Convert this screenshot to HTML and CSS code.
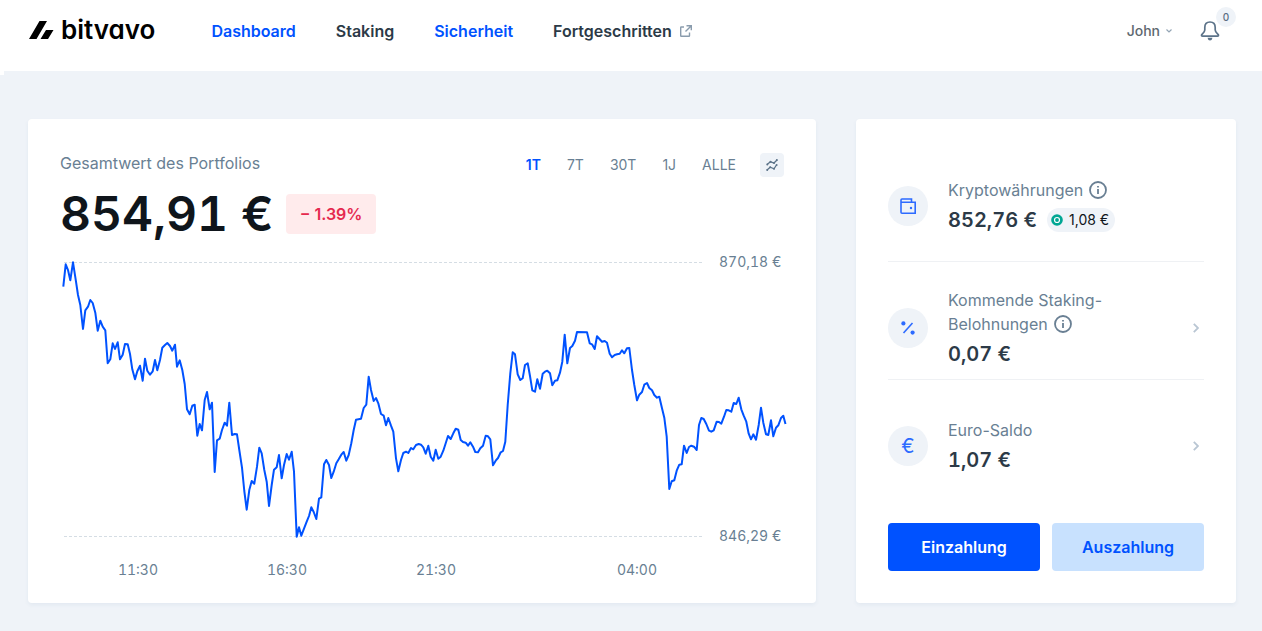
FILE: index.html
```html
<!DOCTYPE html>
<html lang="de">
<head>
<meta charset="utf-8">
<meta name="viewport" content="width=device-width, initial-scale=1">
<title>Bitvavo – Dashboard</title>
<link rel="stylesheet" href="styles.css">
</head>
<body>
<header class="header">
  <a class="logo" href="#">
    <svg class="logo-mark" width="25" height="18" viewBox="0 0 25 18" aria-hidden="true"><path d="M0 18 10.500 0H18L7.500 18Z M11.500 18 17 9H24.500L19 18Z"/></svg>
    <span class="logo-name">bitvavo</span>
  </a>
  <nav class="nav">
    <a class="nav-link nav-link-blue" href="#">Dashboard</a>
    <a class="nav-link" href="#">Staking</a>
    <a class="nav-link nav-link-blue" href="#">Sicherheit</a>
    <a class="nav-link" href="#">Fortgeschritten
      <svg class="external" width="12" height="12" viewBox="0 0 12 12" aria-hidden="true"><path d="M4 2H1.200Q.7 2 .7 2.500V10.800Q.7 11.300 1.200 11.300H9Q9.500 11.300 9.500 10.800V7.500M6.500.7H11.300V5.300M11.300.7 5.500 6.500"/></svg>
    </a>
  </nav>
  <div class="account">
    <button class="user" type="button">John
      <svg width="6" height="4" viewBox="0 0 6 4" aria-hidden="true"><path d="M.5.5 3 3 5.500.5"/></svg>
    </button>
    <button class="bell" type="button" aria-label="Benachrichtigungen">
      <svg width="20" height="20" viewBox="0 0 20 20" aria-hidden="true"><path class="bell-body" d="M10 1C6.500 1 4.800 3.300 4.800 6.500V9C4.800 11 2.800 12.500 1.700 13.600Q1 15 2.700 15.200H17.300Q19 15 18.300 13.600C17.200 12.500 15.200 11 15.200 9V6.500C15.200 3.300 13.500 1 10 1Z"/><path class="bell-clapper" d="M7.500 16.700H12.500Q12 19.500 10 19.500T7.500 16.700Z"/></svg>
      <span class="bell-count">0</span>
    </button>
  </div>
</header>
<main class="main">
  <section class="card portfolio">
    <div class="portfolio-top">
      <h1 class="label">Gesamtwert des Portfolios</h1>
      <div class="ranges">
        <button class="range range-active" type="button">1T</button>
        <button class="range" type="button">7T</button>
        <button class="range" type="button">30T</button>
        <button class="range" type="button">1J</button>
        <button class="range" type="button">ALLE</button>
        <button class="compare" type="button" aria-label="Vergleichen">
          <svg width="12" height="12" viewBox="0 0 12 12" aria-hidden="true"><path d="M1 5.500 4.500 2.800 8 4 11 1M1 11 4.200 8.200 8 9.800 10.500 6"/><g><circle cx="1.300" cy="5.500" r="1"/><circle cx="4.500" cy="2.800" r="1"/><circle cx="8" cy="4" r="1"/><circle cx="10.900" cy="1.100" r="1"/><circle cx="1.200" cy="10.900" r="1"/><circle cx="4.200" cy="8.200" r="1"/><circle cx="8" cy="9.800" r="1"/><circle cx="10.600" cy="6" r="1"/></g></svg>
        </button>
      </div>
    </div>
    <div class="total-row">
      <span class="total">854,91 €</span>
      <span class="change">− 1.39%</span>
    </div>
    <svg class="chart" viewBox="60 250 724 329" role="img" aria-label="Portfolioverlauf über einen Tag">
      <path class="chart-limit" d="M64 262.500H702M64 536.500H702"/>
      <polyline class="chart-line" points="63.3,286.7 65.7,264.3 68,270 70.3,280.3 73,262.3 76,281.7 78,295 80.3,305 83,329 85.3,310.3 88,306.7 90.3,300 92.7,303 95.3,312.7 97.7,330.7 100.3,320.7 102.7,326.7 105.3,330.3 107.7,363.3 110.3,359.3 112.7,343.3 115,349 117.7,342.3 120,359.3 122.7,354.7 125,344 127.7,344.3 130,354 132.3,369.3 135,379.3 137.3,371.3 140,365.7 142.7,380.7 145,358.7 147.3,370.7 150,374.7 152.7,371.3 155,360 157.3,370.3 160,360 162.3,347.7 165,345 167.3,343 170,346 172.3,350.7 175,344.7 177,366.7 179.7,360.3 182.3,370 184.7,384 187,409.3 189.7,414.3 192.3,405.7 194.7,404.7 197.3,435.7 199.7,424 202,430.3 204.7,400 207,392 209.7,409.3 212,402.7 214.7,472 217,440.3 219.7,438.7 222,430 224.7,422.7 227,425.7 229.3,402.7 232,435 234.7,434 237,434.3 239.3,450 242,467.7 244.3,491 246.7,509.7 249.3,490 251.7,481 254.3,483.7 257,466.7 259.3,447.7 261.7,453.3 264.3,470 266.7,481.7 269,506 271.7,485 274,469.7 276.7,467.3 279,455 281.7,478.3 284,465 286.7,454 289,459.7 291.7,451.7 294,471.7 296.7,536.7 299,527.3 301.3,535.7 304,528.7 306.7,521.7 309,516 311.3,507.3 313.7,512 316.3,519 319,498.7 321.3,497.3 324,464.3 326.3,460 329,465 331.3,478 333.7,471.7 336.3,463.3 338.7,459.3 341.3,454.7 343.7,452 346.3,460.7 348.7,455 351.3,443.3 353.7,430 356,419.7 361,418.7 363.7,408 366.3,404.7 368.7,376.7 371,390 373.7,401 376,398 378.3,403.3 381,414 383.7,415.7 386,425.3 388.3,418 391,425.7 393.3,431.7 396,458.3 398.3,471.3 401,460 403.3,453 406,451.7 408.3,453 411,448 413.3,449.3 416,445 418.7,444 421,444.7 423.3,447.3 425.7,453.7 428.3,445.7 430.7,456.7 433.3,460.7 435.7,449.7 438.3,458.7 440.7,456.7 443.3,450.7 445.7,443.3 448,436 450.7,439 453.3,433.3 455.7,428.7 458.3,429.7 460.7,440 463,442 465.7,442.7 468,445.7 470.3,442.3 473,446.7 475.3,452 478,452.3 480.3,448.3 483,445.7 485.7,435.7 488,436.3 490.3,439.3 493,465.3 495.7,460.7 498,458 500.7,452.3 503,451 505.3,441.7 507.7,405 510.3,373.3 512.7,352.3 515,354.3 517.7,374.3 520.3,380 522.7,378.3 525,365 527.7,363.3 530,376 532.3,390.3 535,391.7 537.3,379.3 540,388.7 542.7,373.7 545,371.7 547.3,370.7 550,373.3 552.3,385.3 555,380.7 557.3,380.3 560,372.7 562.3,361.7 564.7,334.7 567.3,363.3 570,348 572.3,346 575,340.7 577,332 587,332.3 589.7,343.3 592,344.3 594.7,349 597,336.3 602,341.7 604.7,341 607,342.7 609.7,353.7 612,357.3 614.7,355 617,354.3 619.7,353.7 622,350.3 624.3,353.3 627,348.3 629.3,348 632,370 634.3,385 637,400.3 639.3,394.7 642,392 644.3,384.7 647,383 649.3,388 652,390.3 654.3,395 657,397.7 659.3,396.7 662,408.3 664.3,417.7 666.7,436.7 669.3,489 671.7,481.3 674.3,480.3 676.7,470.7 679.3,464.7 681.7,464.3 684,445.7 686.7,453 689,447 691.3,445.7 694,446.7 696.7,450 699,425 701.3,418 703.7,419 706.3,424 709,430.7 711.3,431.7 713.7,430.3 716.7,421.7 719,422 721.3,423.7 724,416.7 726.3,410 728.7,410.3 731.3,411.7 733.7,403 736.3,404 738.7,397.7 741.3,409.3 743.7,415.7 746.3,421.7 748.7,433.7 751,439.3 753.3,434.3 756,439.7 758.7,425 761,407.7 763.3,422.7 766,434.3 768.3,435 771,420.3 773.3,436.3 776,427.7 778.3,425.3 781,418 783.3,415.7 785.5,424"/>
      <g class="chart-text">
        <text x="719" y="267">870,18 €</text>
        <text x="719" y="541">846,29 €</text>
        <g text-anchor="middle">
          <text x="138" y="575">11:30</text>
          <text x="287" y="575">16:30</text>
          <text x="436" y="575">21:30</text>
          <text x="637" y="575">04:00</text>
        </g>
      </g>
    </svg>
  </section>
  <section class="card balances">
    <div class="balance balance-crypto">
      <span class="disc"><svg width="16" height="16" viewBox="0 0 16 16" aria-hidden="true"><path d="M1 3V14.200Q1 15.200 2 15.200H15.200V4.200H1M1 4V2Q1 1 2 1H11.500V4" /><circle class="dot" cx="11" cy="10" r="1.200"/></svg></span>
      <div class="balance-text">
        <p class="label label-row">Kryptowährungen
          <svg class="info" width="18" height="18" viewBox="0 0 18 18" aria-hidden="true"><circle cx="9" cy="9" r="8"/><path d="M9 8V13M9 5V6.500"/></svg>
        </p>
        <div class="value-row">
          <span class="value">852,76 €</span>
          <span class="staked"><svg width="12" height="12" viewBox="0 0 12 12" aria-hidden="true"><circle cx="6" cy="6" r="5.800" fill="#00a693"/><circle cx="6" cy="6" r="2.500" fill="none" stroke="#fff" stroke-width="1.200"/></svg>1,08 €</span>
        </div>
      </div>
    </div>
    <div class="balance balance-staking">
      <span class="disc"><svg width="16" height="16" viewBox="0 0 16 16" aria-hidden="true"><path d="M3.500 13 12.500 3"/><circle class="dot" cx="3.400" cy="3.400" r="2.100"/><circle class="dot" cx="12.600" cy="12.600" r="2.100"/></svg></span>
      <div class="balance-text">
        <p class="label">Kommende Staking-<br><span class="label-row">Belohnungen
          <svg class="info" width="18" height="18" viewBox="0 0 18 18" aria-hidden="true"><circle cx="9" cy="9" r="8"/><path d="M9 8V13M9 5V6.500"/></svg></span>
        </p>
        <div class="value-row"><span class="value">0,07 €</span></div>
      </div>
      <a class="more" href="#" aria-label="Staking-Belohnungen anzeigen"><svg width="6" height="10" viewBox="0 0 6 10" aria-hidden="true"><path d="M.8.8 5 5 .8 9.200"/></svg></a>
    </div>
    <div class="balance balance-euro">
      <span class="disc"><span class="euro">€</span></span>
      <div class="balance-text">
        <p class="label">Euro-Saldo</p>
        <div class="value-row"><span class="value">1,07 €</span></div>
      </div>
      <a class="more" href="#" aria-label="Euro-Saldo anzeigen"><svg width="6" height="10" viewBox="0 0 6 10" aria-hidden="true"><path d="M.8.8 5 5 .8 9.200"/></svg></a>
    </div>
    <div class="actions">
      <button class="action action-primary" type="button">Einzahlung</button>
      <button class="action" type="button">Auszahlung</button>
    </div>
  </section>
</main>
</body>
</html>
```
FILE: styles.css
```css
* { box-sizing: border-box; }

body {
  margin: 0;
  background: #eff3f8;
  color: #2c3a47;
  font-family: Inter, "Liberation Sans", sans-serif;
  font-size: 16px;
  line-height: 24px;
}

h1, p { margin: 0; font-size: 16px; font-weight: 400; }
a { color: inherit; text-decoration: none; }
button { padding: 0; border: 0; background: none; color: inherit; font: inherit; cursor: pointer; }
svg { display: block; fill: none; flex: none; }

.header {
  position: relative;
  display: flex;
  align-items: center;
  padding: 14px 32px 13px 29px;
  background: #fff;
}
.header::after {
  content: "";
  position: absolute;
  left: 0;
  top: 100%;
  width: 4px;
  height: 4px;
  background: #fff;
}
.logo { display: flex; align-items: center; gap: 7px; margin-bottom: 12px; color: #000; }
.logo-mark { fill: currentColor; }
.logo-name { font-size: 26px; font-weight: 600; line-height: 32px; font-feature-settings: "cv11"; }
.nav { display: flex; gap: 40px; margin: 0 auto 10px 56px; font-weight: 600; }
.nav-link { display: flex; align-items: center; gap: 8px; }
.nav-link-blue { color: #0052ff; }
.external { stroke: #8a9cad; stroke-width: 1.4; }
.account { display: flex; align-items: center; gap: 28px; margin-bottom: 10px; color: #5c6f82; }
.user { display: flex; align-items: center; gap: 6px; font-size: 14px; font-weight: 500; color: #5e6870; }
.user svg { stroke: #93a5b5; stroke-width: 1.2; }
.bell { position: relative; padding-right: 10px; }
.bell-body { stroke: #5c7389; stroke-width: 1.7; }
.bell-clapper { fill: #5c7389; }
.bell-count {
  position: absolute;
  right: -6px;
  top: -14px;
  width: 20px;
  height: 20px;
  border-radius: 50%;
  background: #eff3f8;
  font-size: 10px;
  font-weight: 500;
  line-height: 20px;
}

.main {
  display: grid;
  grid-template-columns: minmax(0, 1fr) 380px;
  gap: 40px;
  padding: 48px 26px 28px 28px;
}
.card { padding: 32px; border-radius: 4px; background: #fff; box-shadow: 0 2px 4px rgba(40, 80, 130, 0.06); }
.label { color: #697f93; }
.label-row { display: flex; align-items: center; gap: 6px; }

.portfolio { padding-bottom: 24px; }
.portfolio-top { display: flex; justify-content: space-between; align-items: flex-start; }
.ranges { display: flex; align-items: center; padding-top: 2px; color: #697f93; font-size: 14px; }
.range + .range { margin-left: 26px; }
.range-active { color: #0052ff; font-weight: 600; }
.compare { margin-left: 24px; padding: 6px; border-radius: 4px; background: #eff3f8; }
.compare path { stroke: #5c7389; stroke-width: 1.3; }
.compare g { fill: #5c7389; }
.total-row { display: flex; align-items: center; gap: 12px; padding: 7px 0 6px; }
.total { color: #0f151b; font-size: 48px; font-weight: 600; line-height: 60px; font-variant-numeric: tabular-nums; }
.change { padding: 8px 14px; border-radius: 4px; background: #ffebec; color: #e5294f; font-weight: 600; }
.chart { width: 100%; height: auto; overflow: visible; }
.chart-limit { stroke: #d5dde4; stroke-dasharray: 3 2; }
.chart-line { stroke: #0052ff; stroke-width: 2; stroke-linejoin: round; }
.chart-text { fill: #697f93; font-size: 14px; font-variant-numeric: tabular-nums; }

.balances { display: flex; flex-direction: column; }
.balance { display: flex; align-items: center; gap: 20px; border-bottom: 1px solid #eff1f4; }
.balance-crypto { padding: 27px 0; }
.balance-staking { padding: 26px 0 11px; }
.balance-euro { padding: 38px 0 0; border-bottom: 0; }
.balance-text { flex: 1; }
.disc {
  display: flex;
  align-items: center;
  justify-content: center;
  width: 40px;
  height: 40px;
  border-radius: 50%;
  background: #eff3f8;
}
.disc path { stroke: #2d6bff; stroke-width: 1.6; }
.dot { fill: #2d6bff; }
.euro { color: #2d6bff; font-size: 20px; }
.info { stroke: #697f93; stroke-width: 1.8; }
.value-row { display: flex; align-items: center; gap: 10px; height: 28px; margin-top: 4px; }
.value { font-size: 20px; font-weight: 600; line-height: 28px; font-variant-numeric: tabular-nums; }
.staked {
  display: flex;
  align-items: center;
  gap: 6px;
  padding: 0 6px 0 4px;
  border-radius: 12px;
  background: #eff3f8;
  color: #0f151b;
  font-size: 14px;
}
.more { padding-right: 5px; }
.more path { stroke: #b9c6d3; stroke-width: 1.8; }
.actions { display: grid; grid-template-columns: 1fr 1fr; gap: 12px; margin-top: auto; }
.action { height: 48px; border-radius: 4px; background: #c8e1fe; color: #0052ff; font-weight: 600; }
.action-primary { background: #0052ff; color: #fff; }
```
